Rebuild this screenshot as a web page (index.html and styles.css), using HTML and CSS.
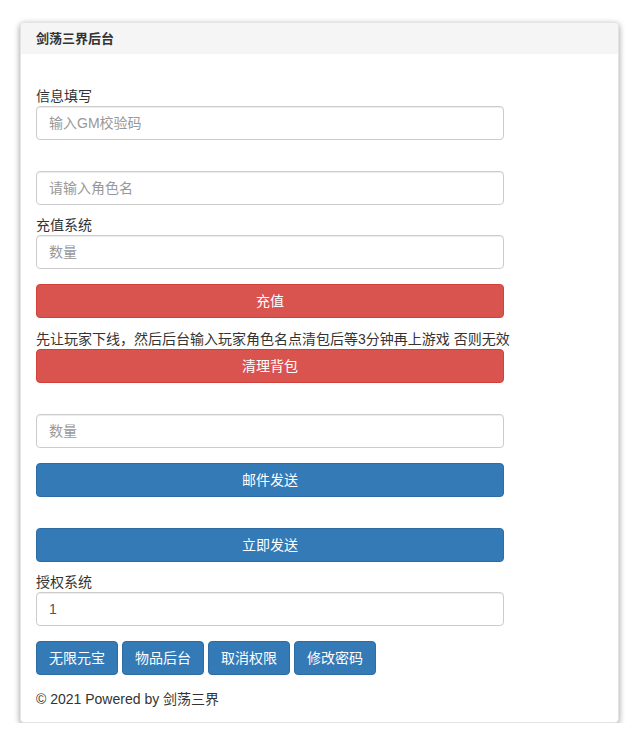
FILE: index.html
```html
<!DOCTYPE html>
<html lang="zh-CN">
<head>
<meta charset="utf-8">
<title>剑荡三界后台</title>
<link rel="stylesheet" href="styles.css">
</head>
<body>
<div class="panel">
  <div class="panel-heading">剑荡三界后台</div>
  <div class="panel-body">
    <label class="label">信息填写</label>
    <input class="field" type="text" placeholder="输入GM校验码">
    <input class="field gap-lg" type="text" placeholder="请输入角色名">
    <label class="label gap-sm">充值系统</label>
    <input class="field" type="text" placeholder="数量">
    <button class="btn btn-danger btn-block gap-md">充值</button>
    <p class="note">先让玩家下线，然后后台输入玩家角色名点清包后等3分钟再上游戏 否则无效</p>
    <button class="btn btn-danger btn-block">清理背包</button>
    <input class="field gap-lg" type="text" placeholder="数量">
    <button class="btn btn-primary btn-block gap-md">邮件发送</button>
    <button class="btn btn-primary btn-block gap-lg">立即发送</button>
    <label class="label gap-sm">授权系统</label>
    <input class="field" type="text" value="1">
    <div class="btn-row">
      <button class="btn btn-primary">无限元宝</button>
      <button class="btn btn-primary">物品后台</button>
      <button class="btn btn-primary">取消权限</button>
      <button class="btn btn-primary">修改密码</button>
    </div>
    <p class="footer">© 2021 Powered by 剑荡三界</p>
  </div>
</div>
</body>
</html>
```

FILE: styles.css
```css
* {
  box-sizing: border-box;
}

html, body {
  margin: 0;
  padding: 0;
  background: #fff;
}

body {
  font-family: "Liberation Sans", Arial, "Noto Sans CJK SC", sans-serif;
  font-size: 14px;
  line-height: 20px;
  color: #333;
}

.panel {
  margin: 22px 0 0 20px;
  width: 599px;
  background: #fff;
  border: 1px solid #e4e4e4;
  border-radius: 4px;
  box-shadow: 0 2px 6px rgba(0, 0, 0, 0.4);
}

.panel-heading {
  height: 31px;
  line-height: 31px;
  padding: 0 15px;
  background: #f5f5f5;
  font-size: 13px;
  font-weight: bold;
  color: #333;
  border-radius: 3px 3px 0 0;
}

.panel-body {
  padding: 32px 15px 13px 15px;
}

.label {
  display: block;
  height: 20px;
  line-height: 20px;
  font-weight: normal;
  margin: 0;
}

.field {
  display: block;
  width: 468px;
  height: 34px;
  padding: 6px 12px;
  font-family: inherit;
  font-size: 14px;
  line-height: 20px;
  color: #555;
  background: #fff;
  border: 1px solid #ccc;
  border-radius: 4px;
  box-shadow: inset 0 1px 1px rgba(0, 0, 0, 0.075);
  margin: 0;
}

.field::placeholder {
  color: #999;
}

.btn {
  display: inline-block;
  height: 34px;
  padding: 6px 12px;
  font-family: inherit;
  font-size: 14px;
  line-height: 20px;
  color: #fff;
  border: 1px solid transparent;
  border-radius: 4px;
  text-align: center;
  cursor: pointer;
  margin: 0;
}

.btn-block {
  display: block;
  width: 468px;
}

.btn-danger {
  background: #d9534f;
  border-color: #d43f3a;
}

.btn-primary {
  background: #337ab7;
  border-color: #2e6da4;
}

.note {
  margin: 11px 0 0 0;
  height: 20px;
  line-height: 20px;
  white-space: nowrap;
}

.btn-row {
  display: flex;
  gap: 4px;
  margin-top: 15px;
}

.footer {
  margin: 14px 0 0 0;
  line-height: 20px;
}

.gap-sm {
  margin-top: 10px;
}

.gap-md {
  margin-top: 15px;
}

.gap-lg {
  margin-top: 31px;
}
```
